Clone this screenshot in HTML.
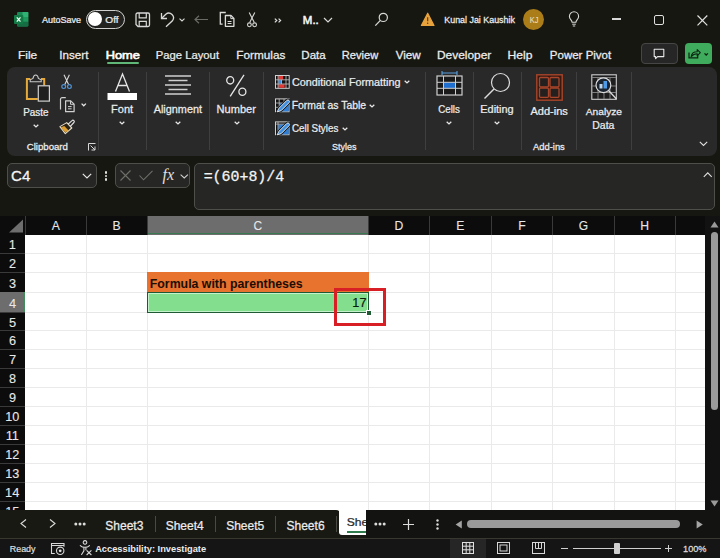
<!DOCTYPE html>
<html><head><meta charset="utf-8"><style>
html,body{margin:0;padding:0;}
body{width:720px;height:558px;overflow:hidden;position:relative;background:#171711;font-family:"Liberation Sans", sans-serif;}
.t{position:absolute;white-space:nowrap;}
.r{position:absolute;}
svg.r{overflow:visible;}
</style></head><body>
<svg class="r" style="left:14px;top:12px" width="15" height="15" viewBox="0 0 15 15"><rect x="3" y="0" width="11.3" height="14.5" rx="1.2" fill="#1b8a55"/>
<rect x="8.5" y="0" width="5.8" height="5" fill="#2fb274"/>
<rect x="3" y="5" width="11.3" height="4.8" fill="#1e9a5d"/>
<rect x="3" y="9.8" width="11.3" height="4.7" rx="1" fill="#176d43"/>
<rect x="0" y="3" width="9.3" height="9" rx="1" fill="#127a45"/>
<path d="M2.8 5.3 L6.5 9.7 M6.5 5.3 L2.8 9.7" stroke="#f0fff4" stroke-width="1.3"/></svg>
<svg class="r" style="left:0;top:0" width="1" height="1"><text transform="translate(42.08,23) scale(1.0149,1)" font-size="8.89" fill="#ececec" font-weight="400" font-family="'Liberation Sans', sans-serif"  stroke="#ececec" stroke-width="0.25">AutoSave</text></svg>
<div class="r" style="left:86px;top:10px;width:39px;height:18.5px;border:1.5px solid #d0d0d0;border-radius:10px;box-sizing:border-box;background:#222220"></div>
<div class="r" style="left:88.3px;top:12.3px;width:13.8px;height:13.8px;background:#fff;border-radius:50%"></div>
<svg class="r" style="left:0;top:0" width="1" height="1"><text transform="translate(105.32,23) scale(1.0953,1)" font-size="9.27" fill="#ececec" font-weight="400" font-family="'Liberation Sans', sans-serif"  stroke="#ececec" stroke-width="0.25">Off</text></svg>
<svg class="r" style="left:135px;top:12px" width="16" height="16" viewBox="0 0 16 16"><path d="M2.5 1 H13 A1.5 1.5 0 0 1 14.5 2.5 V13 A1.5 1.5 0 0 1 13 14.5 H3 L1 12.5 V2.5 A1.5 1.5 0 0 1 2.5 1 Z" fill="none" stroke="#d8d8d8" stroke-width="1.3"/>
<path d="M4.2 1 V5.8 H11.3 V1" fill="none" stroke="#d8d8d8" stroke-width="1.2"/>
<path d="M4.2 14.5 V9.3 H11.3 V14.5" fill="none" stroke="#d8d8d8" stroke-width="1.2"/></svg>
<svg class="r" style="left:159px;top:11px" width="17" height="17" viewBox="0 0 17 17"><path d="M2.5 2 V7.5 H8" fill="none" stroke="#d8d8d8" stroke-width="1.3"/>
<path d="M2.5 7.5 L6.8 3.2 A4.7 4.7 0 0 1 13.4 9.8 L7 15.8" fill="none" stroke="#d8d8d8" stroke-width="1.3"/></svg>
<svg class="r" style="left:179.3px;top:17.6px" width="6" height="3.5" viewBox="0 0 6 3.5"><path d="M0.5 0.6 L3 3 L5.5 0.6" fill="none" stroke="#d8d8d8" stroke-width="1.1"/></svg>
<svg class="r" style="left:194px;top:15px" width="15" height="9" viewBox="0 0 15 9"><path d="M14 4.5 H1 M5 0.7 L1 4.5 L5 8.3" fill="none" stroke="#6b6b66" stroke-width="1.2"/></svg>
<svg class="r" style="left:218px;top:11px" width="18" height="17" viewBox="0 0 18 17"><path d="M4.6 13.2 H2.3 V1.5 H7.8" fill="none" stroke="#dcdcdc" stroke-width="1.3"/>
<path d="M7.4 4.5 H13 L15.9 7.4 V15.3 H7.4 Z" fill="none" stroke="#dcdcdc" stroke-width="1.3" stroke-linejoin="round"/>
<path d="M12.8 4.5 V7.6 H15.9" fill="none" stroke="#dcdcdc" stroke-width="1"/>
<path d="M9.6 10.5 H13.5 M9.6 12.5 H13.5" stroke="#dcdcdc" stroke-width="1.1"/></svg>
<svg class="r" style="left:247px;top:12px" width="10" height="16" viewBox="0 0 10 16"><path d="M2.2 0.5 L7.3 10.5 M7.8 0.5 L2.7 10.5" stroke="#d8d8d8" stroke-width="1.1" fill="none"/>
<circle cx="2.4" cy="12.8" r="1.9" fill="none" stroke="#d8d8d8" stroke-width="1.1"/>
<circle cx="7.6" cy="12.8" r="1.9" fill="none" stroke="#d8d8d8" stroke-width="1.1"/></svg>
<svg class="r" style="left:274px;top:17.5px" width="8" height="5" viewBox="0 0 8 5"><path d="M0.8 0.6 L2.8 2.5 L0.8 4.4 M4.6 0.6 L6.6 2.5 L4.6 4.4" fill="none" stroke="#e0e0e0" stroke-width="1.2"/></svg>
<svg class="r" style="left:0;top:0" width="1" height="1"><text transform="translate(302.80,24) scale(1.0156,1)" font-size="11.35" fill="#f4f4f4" font-weight="400" font-family="'Liberation Sans', sans-serif"  stroke="#f4f4f4" stroke-width="0.55">M..</text></svg>
<svg class="r" style="left:322.5px;top:16.5px" width="10" height="6" viewBox="0 0 10 6"><path d="M1 1 L5 5 L9 1" fill="none" stroke="#d8d8d8" stroke-width="1.2"/></svg>
<svg class="r" style="left:374px;top:11px" width="15" height="16" viewBox="0 0 15 16"><circle cx="9.3" cy="6.4" r="4.1" fill="none" stroke="#d8d8d8" stroke-width="1.2"/><path d="M6.4 9.4 L1.3 14.6" stroke="#d8d8d8" stroke-width="1.3"/></svg>
<svg class="r" style="left:420px;top:11px" width="16" height="16" viewBox="0 0 16 16"><path d="M7.7 2.2 L14 14.5 H1.4 Z" fill="#e8a33d" stroke="#e8a33d" stroke-linejoin="round" stroke-width="1.2"/><path d="M7.7 6.3 V10.3" stroke="#4a3210" stroke-width="1.1"/><circle cx="7.7" cy="12.3" r="0.7" fill="#4a3210"/></svg>
<svg class="r" style="left:0;top:0" width="1" height="1"><text transform="translate(444.27,23) scale(0.9924,1)" font-size="8.97" fill="#ececec" font-weight="400" font-family="'Liberation Sans', sans-serif"  stroke="#ececec" stroke-width="0.25">Kunal Jai Kaushik</text></svg>
<div class="r" style="left:523.3px;top:8.9px;width:21.1px;height:21.1px;background:#ab7d18;border-radius:50%"></div>
<svg class="r" style="left:0;top:0" width="1" height="1"><text transform="translate(529.69,23) scale(0.7977,1)" font-size="9.31" fill="#f3e4c4" font-weight="400" font-family="'Liberation Sans', sans-serif" >KJ</text></svg>
<svg class="r" style="left:568px;top:11px" width="13" height="17" viewBox="0 0 13 17"><path d="M4.1 11.2 C4.1 9.3 1.4 8.2 1.4 5.4 A4.6 4.6 0 0 1 10.6 5.4 C10.6 8.2 7.9 9.3 7.9 11.2 Z" fill="none" stroke="#d8d8d8" stroke-width="1.1"/>
<path d="M4.2 13.2 H7.8 M4.8 15 H7.2" stroke="#d8d8d8" stroke-width="1"/></svg>
<div class="r" style="left:611.7px;top:18.4px;width:9.5px;height:1.2px;background:#d8d8d8"></div>
<div class="r" style="left:654px;top:14.8px;width:10px;height:9.8px;border:1.3px solid #e0e0e0;border-radius:2px;box-sizing:border-box"></div>
<svg class="r" style="left:696.5px;top:14.5px" width="11" height="11" viewBox="0 0 11 11"><path d="M0.5 0.5 L10.3 10.3 M10.3 0.5 L0.5 10.3" stroke="#e0e0e0" stroke-width="1.2"/></svg>
<svg class="r" style="left:0;top:0" width="1" height="1"><text transform="translate(18.02,59) scale(1.1079,1)" font-size="10.76" fill="#ececec" font-weight="400" font-family="'Liberation Sans', sans-serif"  stroke="#ececec" stroke-width="0.25">File</text></svg>
<svg class="r" style="left:0;top:0" width="1" height="1"><text transform="translate(59.22,59) scale(1.0283,1)" font-size="11.35" fill="#ececec" font-weight="400" font-family="'Liberation Sans', sans-serif"  stroke="#ececec" stroke-width="0.25">Insert</text></svg>
<svg class="r" style="left:0;top:0" width="1" height="1"><text transform="translate(105.64,59) scale(1.1301,1)" font-size="11.35" fill="#ffffff" font-weight="400" font-family="'Liberation Sans', sans-serif"  stroke="#ffffff" stroke-width="0.6">Home</text></svg>
<svg class="r" style="left:0;top:0" width="1" height="1"><text transform="translate(155.77,59) scale(0.9939,1)" font-size="11.35" fill="#ececec" font-weight="400" font-family="'Liberation Sans', sans-serif"  stroke="#ececec" stroke-width="0.25">Page Layout</text></svg>
<svg class="r" style="left:0;top:0" width="1" height="1"><text transform="translate(236.33,59) scale(1.0947,1)" font-size="10.76" fill="#ececec" font-weight="400" font-family="'Liberation Sans', sans-serif"  stroke="#ececec" stroke-width="0.25">Formulas</text></svg>
<svg class="r" style="left:0;top:0" width="1" height="1"><text transform="translate(301.35,59) scale(1.0160,1)" font-size="11.35" fill="#ececec" font-weight="400" font-family="'Liberation Sans', sans-serif"  stroke="#ececec" stroke-width="0.25">Data</text></svg>
<svg class="r" style="left:0;top:0" width="1" height="1"><text transform="translate(341.78,59) scale(1.0341,1)" font-size="10.76" fill="#ececec" font-weight="400" font-family="'Liberation Sans', sans-serif"  stroke="#ececec" stroke-width="0.25">Review</text></svg>
<svg class="r" style="left:0;top:0" width="1" height="1"><text transform="translate(395.64,59) scale(1.0821,1)" font-size="10.76" fill="#ececec" font-weight="400" font-family="'Liberation Sans', sans-serif"  stroke="#ececec" stroke-width="0.25">View</text></svg>
<svg class="r" style="left:0;top:0" width="1" height="1"><text transform="translate(437.02,59) scale(1.1087,1)" font-size="10.76" fill="#ececec" font-weight="400" font-family="'Liberation Sans', sans-serif"  stroke="#ececec" stroke-width="0.25">Developer</text></svg>
<svg class="r" style="left:0;top:0" width="1" height="1"><text transform="translate(507.50,59) scale(1.1255,1)" font-size="10.76" fill="#ececec" font-weight="400" font-family="'Liberation Sans', sans-serif"  stroke="#ececec" stroke-width="0.25">Help</text></svg>
<svg class="r" style="left:0;top:0" width="1" height="1"><text transform="translate(549.85,59) scale(1.0704,1)" font-size="10.76" fill="#ececec" font-weight="400" font-family="'Liberation Sans', sans-serif"  stroke="#ececec" stroke-width="0.25">Power Pivot</text></svg>
<div class="r" style="left:106.7px;top:62px;width:32.6px;height:2px;background:#5fb878;border-radius:1px"></div>
<div class="r" style="left:640.5px;top:43.2px;width:37.3px;height:21.3px;border:1px solid #464646;border-radius:4px;box-sizing:border-box;background:#262626"></div>
<svg class="r" style="left:653px;top:48px" width="13" height="12" viewBox="0 0 13 12"><path d="M1.2 1.2 H10.8 V8.6 H4.6 L2.6 10.6 V8.6 H1.2 Z" fill="none" stroke="#e8e8e8" stroke-width="1.1" stroke-linejoin="round"/></svg>
<div class="r" style="left:685px;top:43.2px;width:27.2px;height:21.1px;background:#3fab5c;border-radius:4px"></div>
<svg class="r" style="left:686px;top:46px" width="26" height="15" viewBox="0 0 26 15"><path d="M3 6.5 V11.9 H11.7 V9.3" fill="none" stroke="#0c2412" stroke-width="1.2"/><path d="M5.2 10.6 C5.6 7.4 7.8 5.8 11.2 5.8 V3.6 L14.3 6.7 L11.2 9.8 V7.7 C8.8 7.7 6.8 8.6 5.2 10.6 Z" fill="none" stroke="#0c2412" stroke-width="1.1" stroke-linejoin="round"/><path d="M18.5 7.4 L20.2 9 L21.9 7.4" fill="none" stroke="#0c2412" stroke-width="1.3"/></svg>
<div class="r" style="left:7px;top:67px;width:709.5px;height:88.5px;background:#292929;border-radius:8px"></div>
<div class="r" style="left:98px;top:71.5px;width:1px;height:78.5px;background:#3f3f3f"></div>
<div class="r" style="left:146px;top:71.5px;width:1px;height:78.5px;background:#3f3f3f"></div>
<div class="r" style="left:209px;top:71.5px;width:1px;height:78.5px;background:#3f3f3f"></div>
<div class="r" style="left:263px;top:71.5px;width:1px;height:78.5px;background:#3f3f3f"></div>
<div class="r" style="left:425px;top:71.5px;width:1px;height:78.5px;background:#3f3f3f"></div>
<div class="r" style="left:473px;top:71.5px;width:1px;height:78.5px;background:#3f3f3f"></div>
<div class="r" style="left:521px;top:71.5px;width:1px;height:78.5px;background:#3f3f3f"></div>
<div class="r" style="left:576px;top:71.5px;width:1px;height:78.5px;background:#3f3f3f"></div>
<div class="r" style="left:631px;top:71.5px;width:1px;height:78.5px;background:#3f3f3f"></div>
<svg class="r" style="left:20px;top:70px" width="36" height="36" viewBox="0 0 36 36"><path d="M10.3 9 H6.9 V29 H17.8" fill="none" stroke="#e6a93c" stroke-width="2"/>
<path d="M21 9 H24.2 V15.5" fill="none" stroke="#e6a93c" stroke-width="2"/>
<path d="M10.2 11.7 V9.8 L13 8.4 C13.4 6 14.4 5 15.7 5 C17 5 18 6 18.4 8.4 L21.2 9.8 V11.7 Z" fill="#292929" stroke="#c8c8c8" stroke-width="1.1"/>
<rect x="18.3" y="15.8" width="11.1" height="15.3" fill="#1f1f1f" stroke="#d0d0d0" stroke-width="1.2"/></svg>
<svg class="r" style="left:0;top:0" width="1" height="1"><text transform="translate(23.18,116) scale(0.9470,1)" font-size="10.47" fill="#ececec" font-weight="400" font-family="'Liberation Sans', sans-serif"  stroke="#ececec" stroke-width="0.25">Paste</text></svg>
<svg class="r" style="left:32.5px;top:123.5px" width="6" height="4" viewBox="0 0 6 4"><path d="M0.7 0.7 L3 2.9 L5.3 0.7" fill="none" stroke="#e8e8e8" stroke-width="1.3"/></svg>
<svg class="r" style="left:60px;top:73px" width="14" height="17" viewBox="0 0 14 17"><path d="M4 1.8 L8.6 11.6 M9.4 1.8 L4.8 11.6" stroke="#d8d8d8" stroke-width="1.1" fill="none"/>
<circle cx="3.7" cy="13.6" r="1.9" fill="none" stroke="#5294d6" stroke-width="1.2"/>
<circle cx="9.4" cy="13.6" r="1.9" fill="none" stroke="#5294d6" stroke-width="1.2"/></svg>
<svg class="r" style="left:58px;top:96px" width="18" height="17" viewBox="0 0 18 17"><path d="M2.5 13.4 V3.2 A1.6 1.6 0 0 1 4.1 1.6 H7.8" fill="none" stroke="#cfcfcf" stroke-width="1.2"/>
<path d="M7.6 4.8 H12.7 L16.1 8.2 V15.7 H7.6 Z" fill="none" stroke="#cfcfcf" stroke-width="1.2" stroke-linejoin="round"/>
<path d="M12.5 4.8 V8.3 H16" fill="none" stroke="#cfcfcf" stroke-width="1"/>
<path d="M10 10.6 H13.6 M10 12.8 H13.6" stroke="#cfcfcf" stroke-width="1"/></svg>
<svg class="r" style="left:80.8px;top:103px" width="5.5" height="3.5" viewBox="0 0 5.5 3.5"><path d="M0.6 0.6 L2.75 2.8 L4.9 0.6" fill="none" stroke="#e6e6e6" stroke-width="1.3"/></svg>
<svg class="r" style="left:58px;top:119px" width="18" height="16" viewBox="0 0 18 16"><path d="M1.9 7.6 L8.75 3.6 L13.8 9 L7.3 14.6 Z" fill="#2a2418" stroke="#e6dcc6" stroke-width="1.1" stroke-linejoin="round"/>
<path d="M2.9 8.3 L6.3 6.9 L10.6 11.6 L7.3 13.5 Z" fill="#e0a030"/>
<path d="M10.2 5.2 L14 1.6 A1.3 1.3 0 0 1 15.9 3.5 L12.3 7.3" stroke="#e6e6e6" stroke-width="1.1" fill="none"/></svg>
<svg class="r" style="left:0;top:0" width="1" height="1"><text transform="translate(26.72,150) scale(1.0596,1)" font-size="9.10" fill="#ececec" font-weight="400" font-family="'Liberation Sans', sans-serif"  stroke="#ececec" stroke-width="0.25">Clipboard</text></svg>
<svg class="r" style="left:87.5px;top:143px" width="8" height="8" viewBox="0 0 8 8"><path d="M0.5 7.5 V0.5 H7.5" fill="none" stroke="#d8d8d8" stroke-width="1"/><path d="M2.5 2.5 L7 7 M3.5 7 H7 V3.5" fill="none" stroke="#d8d8d8" stroke-width="1"/></svg>
<svg class="r" style="left:107px;top:73px" width="31" height="27" viewBox="0 0 31 27"><path d="M8.5 18.5 L15.5 1 L22.5 18.5 M11 12.5 H20" fill="none" stroke="#e6e6e6" stroke-width="1.3"/><rect x="0.5" y="20" width="29.5" height="7" fill="#ffffff"/></svg>
<svg class="r" style="left:0;top:0" width="1" height="1"><text transform="translate(111.09,113) scale(0.9449,1)" font-size="11.64" fill="#ececec" font-weight="400" font-family="'Liberation Sans', sans-serif"  stroke="#ececec" stroke-width="0.25">Font</text></svg>
<svg class="r" style="left:119.3px;top:120.5px" width="6" height="4" viewBox="0 0 6 4"><path d="M0.7 0.7 L3 2.9 L5.3 0.7" fill="none" stroke="#e8e8e8" stroke-width="1.3"/></svg>
<svg class="r" style="left:165px;top:75px" width="26" height="21" viewBox="0 0 26 21"><path d="M0 1 H26 M3.5 5.5 H22.5 M0 10 H26 M3.5 14.5 H22.5 M0 19 H26" stroke="#cfcfcf" stroke-width="1.3"/></svg>
<svg class="r" style="left:0;top:0" width="1" height="1"><text transform="translate(153.72,113) scale(0.9854,1)" font-size="11.03" fill="#ececec" font-weight="400" font-family="'Liberation Sans', sans-serif"  stroke="#ececec" stroke-width="0.25">Alignment</text></svg>
<svg class="r" style="left:174.5px;top:120.5px" width="6" height="4" viewBox="0 0 6 4"><path d="M0.7 0.7 L3 2.9 L5.3 0.7" fill="none" stroke="#e8e8e8" stroke-width="1.3"/></svg>
<svg class="r" style="left:225px;top:74px" width="24" height="23" viewBox="0 0 24 23"><ellipse cx="5.2" cy="6.3" rx="3.5" ry="3.7" fill="none" stroke="#e6e6e6" stroke-width="1.3"/><ellipse cx="17.4" cy="17.7" rx="3.5" ry="3.6" fill="none" stroke="#e6e6e6" stroke-width="1.3"/><path d="M19 0.9 L5.2 22.3" stroke="#e6e6e6" stroke-width="1.3"/></svg>
<svg class="r" style="left:0;top:0" width="1" height="1"><text transform="translate(216.59,113) scale(1.0026,1)" font-size="11.03" fill="#ececec" font-weight="400" font-family="'Liberation Sans', sans-serif"  stroke="#ececec" stroke-width="0.25">Number</text></svg>
<svg class="r" style="left:233.75px;top:120.5px" width="6" height="4" viewBox="0 0 6 4"><path d="M0.7 0.7 L3 2.9 L5.3 0.7" fill="none" stroke="#e8e8e8" stroke-width="1.3"/></svg>
<svg class="r" style="left:274.5px;top:74.5px" width="15" height="14" viewBox="0 0 15 14"><rect x="0.5" y="0.5" width="13.7" height="12.8" fill="#141414" stroke="#d0d0d0" stroke-width="1"/>
<rect x="3.4" y="1" width="4.6" height="3.6" fill="#e53935"/><rect x="3.4" y="9.3" width="6.2" height="3.5" fill="#e53935"/>
<rect x="3.4" y="5.1" width="2.8" height="3.6" fill="#3a8ee6"/>
<path d="M0.5 4.8 H14.2 M0.5 9 H14.2 M3.1 0.5 V13.3 M11 0.5 V13.3 M6.5 4.8 V9" stroke="#c8c8c8" stroke-width="0.8"/></svg>
<svg class="r" style="left:0;top:0" width="1" height="1"><text transform="translate(291.96,86) scale(0.9497,1)" font-size="11.38" fill="#ececec" font-weight="400" font-family="'Liberation Sans', sans-serif"  stroke="#ececec" stroke-width="0.25">Conditional Formatting</text></svg>
<svg class="r" style="left:404px;top:80px" width="6" height="4" viewBox="0 0 6 4"><path d="M0.7 0.7 L3 2.9 L5.3 0.7" fill="none" stroke="#e8e8e8" stroke-width="1.3"/></svg>
<svg class="r" style="left:274.5px;top:97.5px" width="15" height="15" viewBox="0 0 15 15"><rect x="0.5" y="0.9" width="13.5" height="12.8" fill="#141414" stroke="#d0d0d0" stroke-width="1"/>
<rect x="4.5" y="5.3" width="9.2" height="8.1" fill="#2f7fd6"/>
<path d="M0.5 5 H14 M0.5 9.3 H4.5 M4.2 0.9 V13.7 M9 0.9 V5" stroke="#c0c0c0" stroke-width="0.8"/><path d="M2.2 13.9 L3.87 10.37 L11.87 2.37 A1.6 1.6 0 0 1 14.13 4.63 L6.13 12.63 Z" fill="none" stroke="#161616" stroke-width="2.4" stroke-linejoin="round"/><path d="M2.2 13.9 L3.87 10.37 L11.87 2.37 A1.6 1.6 0 0 1 14.13 4.63 L6.13 12.63 Z" fill="#3f8fe0" stroke="#ececec" stroke-width="0.9" stroke-linejoin="round"/></svg>
<svg class="r" style="left:0;top:0" width="1" height="1"><text transform="translate(291.64,109) scale(0.9163,1)" font-size="11.38" fill="#ececec" font-weight="400" font-family="'Liberation Sans', sans-serif"  stroke="#ececec" stroke-width="0.25">Format as Table</text></svg>
<svg class="r" style="left:369px;top:103.5px" width="6" height="4" viewBox="0 0 6 4"><path d="M0.7 0.7 L3 2.9 L5.3 0.7" fill="none" stroke="#e8e8e8" stroke-width="1.3"/></svg>
<svg class="r" style="left:274.5px;top:120.5px" width="15" height="15" viewBox="0 0 15 15"><rect x="0.5" y="0.9" width="13.5" height="12.8" fill="#141414" stroke="#d0d0d0" stroke-width="1"/>
<rect x="3.3" y="3.4" width="10.4" height="10" fill="#2f7fd6"/>
<path d="M0.5 3.1 H14 M3 0.9 V13.7" stroke="#c0c0c0" stroke-width="0.8"/><path d="M2.2 13.9 L3.87 10.37 L11.87 2.37 A1.6 1.6 0 0 1 14.13 4.63 L6.13 12.63 Z" fill="none" stroke="#161616" stroke-width="2.4" stroke-linejoin="round"/><path d="M2.2 13.9 L3.87 10.37 L11.87 2.37 A1.6 1.6 0 0 1 14.13 4.63 L6.13 12.63 Z" fill="#3f8fe0" stroke="#ececec" stroke-width="0.9" stroke-linejoin="round"/></svg>
<svg class="r" style="left:0;top:0" width="1" height="1"><text transform="translate(292.01,132) scale(0.8617,1)" font-size="11.38" fill="#ececec" font-weight="400" font-family="'Liberation Sans', sans-serif"  stroke="#ececec" stroke-width="0.25">Cell Styles</text></svg>
<svg class="r" style="left:341.5px;top:127px" width="6" height="4" viewBox="0 0 6 4"><path d="M0.7 0.7 L3 2.9 L5.3 0.7" fill="none" stroke="#e8e8e8" stroke-width="1.3"/></svg>
<svg class="r" style="left:0;top:0" width="1" height="1"><text transform="translate(332.10,150) scale(0.9582,1)" font-size="9.38" fill="#ececec" font-weight="400" font-family="'Liberation Sans', sans-serif"  stroke="#ececec" stroke-width="0.25">Styles</text></svg>
<svg class="r" style="left:436px;top:71px" width="27" height="25" viewBox="0 0 27 25"><path d="M6 2 H21 M6 0 V4 M21 0 V4" stroke="#5aa0e0" stroke-width="1.1"/>
<rect x="1" y="5" width="25" height="19" fill="#1a1a1a" stroke="#cfcfcf" stroke-width="1.2"/>
<rect x="7.5" y="11.3" width="12" height="6" fill="#1f6fd0"/>
<path d="M1 11.3 H26 M1 17.3 H26 M7.5 5 V24 M19.5 5 V24" stroke="#cfcfcf" stroke-width="1"/></svg>
<svg class="r" style="left:0;top:0" width="1" height="1"><text transform="translate(438.26,113) scale(0.8798,1)" font-size="11.03" fill="#ececec" font-weight="400" font-family="'Liberation Sans', sans-serif"  stroke="#ececec" stroke-width="0.25">Cells</text></svg>
<svg class="r" style="left:446.25px;top:120.5px" width="6" height="4" viewBox="0 0 6 4"><path d="M0.7 0.7 L3 2.9 L5.3 0.7" fill="none" stroke="#e8e8e8" stroke-width="1.3"/></svg>
<svg class="r" style="left:483px;top:72px" width="29" height="28" viewBox="0 0 29 28"><circle cx="17.5" cy="10.5" r="9" fill="none" stroke="#dcdcdc" stroke-width="1.2"/><path d="M11 17 L1.5 26.5" stroke="#dcdcdc" stroke-width="1.4"/></svg>
<svg class="r" style="left:0;top:0" width="1" height="1"><text transform="translate(480.35,113) scale(0.9879,1)" font-size="11.03" fill="#ececec" font-weight="400" font-family="'Liberation Sans', sans-serif"  stroke="#ececec" stroke-width="0.25">Editing</text></svg>
<svg class="r" style="left:494.25px;top:120.5px" width="6" height="4" viewBox="0 0 6 4"><path d="M0.7 0.7 L3 2.9 L5.3 0.7" fill="none" stroke="#e8e8e8" stroke-width="1.3"/></svg>
<svg class="r" style="left:536px;top:74px" width="27" height="27" viewBox="0 0 27 27"><rect x="0.8" y="0.8" width="25.4" height="25.4" fill="#361a12" stroke="#a8452a" stroke-width="1.4"/>
<rect x="3.5" y="3.5" width="9" height="9.3" rx="1" fill="#242020" stroke="#a8452a" stroke-width="1.3"/>
<rect x="14" y="3.5" width="9" height="9.3" rx="1" fill="#242020" stroke="#a8452a" stroke-width="1.3"/>
<rect x="3.5" y="14" width="9" height="9.3" rx="1" fill="#242020" stroke="#a8452a" stroke-width="1.3"/>
<rect x="14" y="14" width="9" height="9.3" rx="1" fill="#242020" stroke="#a8452a" stroke-width="1.3"/></svg>
<svg class="r" style="left:0;top:0" width="1" height="1"><text transform="translate(530.47,115) scale(1.0325,1)" font-size="10.69" fill="#ececec" font-weight="400" font-family="'Liberation Sans', sans-serif"  stroke="#ececec" stroke-width="0.25">Add-ins</text></svg>
<svg class="r" style="left:0;top:0" width="1" height="1"><text transform="translate(532.98,150) scale(0.9461,1)" font-size="9.93" fill="#ececec" font-weight="400" font-family="'Liberation Sans', sans-serif"  stroke="#ececec" stroke-width="0.25">Add-ins</text></svg>
<svg class="r" style="left:591px;top:74px" width="27" height="27" viewBox="0 0 27 27"><rect x="0.8" y="0.8" width="24.5" height="24.5" fill="#1e1e1e" stroke="#cfcfcf" stroke-width="1.1"/>
<path d="M0.8 3.5 H25 M0.8 12 H25 M0.8 18.5 H25 M7 3.5 V25 M13 3.5 V25 M19 3.5 V25" stroke="#8a8a8a" stroke-width="0.9"/>
<circle cx="12.4" cy="11.2" r="7.4" fill="#1a2430" stroke="#dcdcdc" stroke-width="1.2"/>
<path d="M17.5 16.5 L25.5 25" stroke="#dcdcdc" stroke-width="1.3"/>
<rect x="8.5" y="10" width="3" height="4.5" fill="#bcd6ee"/><rect x="12.5" y="7" width="3.5" height="7.5" fill="#4c9be8"/></svg>
<svg class="r" style="left:0;top:0" width="1" height="1"><text transform="translate(585.77,115) scale(1.0263,1)" font-size="9.93" fill="#ececec" font-weight="400" font-family="'Liberation Sans', sans-serif"  stroke="#ececec" stroke-width="0.25">Analyze</text></svg>
<svg class="r" style="left:0;top:0" width="1" height="1"><text transform="translate(592.34,129) scale(0.9205,1)" font-size="11.35" fill="#ececec" font-weight="400" font-family="'Liberation Sans', sans-serif"  stroke="#ececec" stroke-width="0.25">Data</text></svg>
<svg class="r" style="left:698.5px;top:140.5px" width="9" height="6" viewBox="0 0 9 6"><path d="M0.8 0.8 L4.5 4.5 L8.2 0.8" fill="none" stroke="#e0e0e0" stroke-width="1.1"/></svg>
<div class="r" style="left:7.2px;top:163.2px;width:89.6px;height:25px;background:#262624;border:1px solid #4e4e4b;border-radius:5px;box-sizing:border-box"></div>
<svg class="r" style="left:0;top:0" width="1" height="1"><text transform="translate(11.05,181) scale(1.0068,1)" font-size="14.98" fill="#f4f4f4" font-weight="400" font-family="'Liberation Sans', sans-serif"  stroke="#f4f4f4" stroke-width="0.25">C4</text></svg>
<svg class="r" style="left:82.2px;top:173.3px" width="10" height="6" viewBox="0 0 10 6"><path d="M0.8 0.8 L5 5 L9.2 0.8" fill="none" stroke="#e6e6e6" stroke-width="1.2"/></svg>
<div class="r" style="left:104.5px;top:171.2px;width:2.6px;height:2.6px;background:#e0e0e0;border-radius:50%"></div>
<div class="r" style="left:104.5px;top:174.6px;width:2.6px;height:2.6px;background:#e0e0e0;border-radius:50%"></div>
<div class="r" style="left:104.5px;top:178.0px;width:2.6px;height:2.6px;background:#e0e0e0;border-radius:50%"></div>
<div class="r" style="left:114.5px;top:163.2px;width:75.5px;height:25px;background:#262624;border:1px solid #4e4e4b;border-radius:5px;box-sizing:border-box"></div>
<svg class="r" style="left:120px;top:170px" width="11" height="11" viewBox="0 0 11 11"><path d="M0.5 0.5 L10.5 10.5 M10.5 0.5 L0.5 10.5" stroke="#6e6e6a" stroke-width="1.1"/></svg>
<svg class="r" style="left:139px;top:170px" width="14" height="11" viewBox="0 0 14 11"><path d="M0.5 5.5 L4.5 9.8 L13.5 0.8" fill="none" stroke="#6e6e6a" stroke-width="1.1"/></svg>
<div class="t" style="left:162.5px;top:166px;font-size:16px;line-height:18px;color:#e0e0e0;font-family:'Liberation Serif', serif;font-style:italic">fx</div>
<svg class="r" style="left:180px;top:173.8px" width="8.5" height="4.5" viewBox="0 0 8.5 4.5"><path d="M0.6 0.6 L4.25 3.9 L7.9 0.6" fill="none" stroke="#d0d0d0" stroke-width="1.1"/></svg>
<div class="r" style="left:194.3px;top:163.3px;width:521px;height:46.3px;background:#262624;border:1px solid #4e4e4b;border-radius:5px;box-sizing:border-box"></div>
<svg class="r" style="left:0;top:0" width="1" height="1"><text transform="translate(203.64,181) scale(1.0224,1)" font-size="14.60" fill="#f4f4f4" font-weight="400" font-family="'Liberation Mono', monospace"  stroke="#f4f4f4" stroke-width="0.25">=(60+8)/4</text></svg>
<svg class="r" style="left:702.5px;top:172px" width="9.5" height="5.5" viewBox="0 0 9.5 5.5"><path d="M0.8 4.8 L4.75 0.8 L8.7 4.8" fill="none" stroke="#e0e0e0" stroke-width="1.1"/></svg>
<div class="r" style="left:0px;top:216px;width:705px;height:18.5px;background:#0c0c0c"></div>
<div class="r" style="left:0px;top:234.5px;width:25px;height:276px;background:#0c0c0c"></div>
<div class="r" style="left:25px;top:234.5px;width:680px;height:276px;background:#ffffff"></div>
<svg class="r" style="left:8px;top:219px" width="16" height="14" viewBox="0 0 16 14"><path d="M15 0.5 V13.5 H1 Z" fill="#6e6e6e"/></svg>
<div class="r" style="left:147.2px;top:216px;width:221.6px;height:18.5px;background:#6d6d6d"></div>
<div class="r" style="left:147.2px;top:233.3px;width:221.6px;height:1.2px;background:#3a7a52"></div>
<div class="r" style="left:24.5px;top:216px;width:1px;height:18.5px;background:#3a3a3a"></div>
<div class="r" style="left:86.0px;top:216px;width:1px;height:18.5px;background:#3a3a3a"></div>
<div class="r" style="left:146.7px;top:216px;width:1px;height:18.5px;background:#3a3a3a"></div>
<div class="r" style="left:368.3px;top:216px;width:1px;height:18.5px;background:#3a3a3a"></div>
<div class="r" style="left:429.0px;top:216px;width:1px;height:18.5px;background:#3a3a3a"></div>
<div class="r" style="left:491.2px;top:216px;width:1px;height:18.5px;background:#3a3a3a"></div>
<div class="r" style="left:552.2px;top:216px;width:1px;height:18.5px;background:#3a3a3a"></div>
<div class="r" style="left:613.5px;top:216px;width:1px;height:18.5px;background:#3a3a3a"></div>
<div class="r" style="left:674.8px;top:216px;width:1px;height:18.5px;background:#3a3a3a"></div>
<svg class="r" style="left:0;top:0" width="1" height="1"><text transform="translate(51.69,230) scale(0.9000,1)" font-size="13.53" fill="#e8e8e8" font-weight="400" font-family="'Liberation Sans', sans-serif"  stroke="#e8e8e8" stroke-width="0.1">A</text></svg>
<svg class="r" style="left:0;top:0" width="1" height="1"><text transform="translate(112.60,230) scale(0.9000,1)" font-size="13.53" fill="#e8e8e8" font-weight="400" font-family="'Liberation Sans', sans-serif"  stroke="#e8e8e8" stroke-width="0.1">B</text></svg>
<svg class="r" style="left:0;top:0" width="1" height="1"><text transform="translate(253.59,230) scale(0.9000,1)" font-size="13.33" fill="#e8e8e8" font-weight="400" font-family="'Liberation Sans', sans-serif"  stroke="#e8e8e8" stroke-width="0.1">C</text></svg>
<svg class="r" style="left:0;top:0" width="1" height="1"><text transform="translate(394.54,230) scale(0.9000,1)" font-size="13.53" fill="#e8e8e8" font-weight="400" font-family="'Liberation Sans', sans-serif"  stroke="#e8e8e8" stroke-width="0.1">D</text></svg>
<svg class="r" style="left:0;top:0" width="1" height="1"><text transform="translate(456.29,230) scale(0.9000,1)" font-size="13.53" fill="#e8e8e8" font-weight="400" font-family="'Liberation Sans', sans-serif"  stroke="#e8e8e8" stroke-width="0.1">E</text></svg>
<svg class="r" style="left:0;top:0" width="1" height="1"><text transform="translate(518.23,230) scale(0.9000,1)" font-size="13.53" fill="#e8e8e8" font-weight="400" font-family="'Liberation Sans', sans-serif"  stroke="#e8e8e8" stroke-width="0.1">F</text></svg>
<svg class="r" style="left:0;top:0" width="1" height="1"><text transform="translate(578.84,230) scale(0.9000,1)" font-size="13.33" fill="#e8e8e8" font-weight="400" font-family="'Liberation Sans', sans-serif"  stroke="#e8e8e8" stroke-width="0.1">G</text></svg>
<svg class="r" style="left:0;top:0" width="1" height="1"><text transform="translate(640.25,230) scale(0.9000,1)" font-size="13.53" fill="#e8e8e8" font-weight="400" font-family="'Liberation Sans', sans-serif"  stroke="#e8e8e8" stroke-width="0.1">H</text></svg>
<div class="r" style="left:86.0px;top:234.5px;width:1px;height:276px;background:#eaeaea"></div>
<div class="r" style="left:146.7px;top:234.5px;width:1px;height:276px;background:#eaeaea"></div>
<div class="r" style="left:368.3px;top:234.5px;width:1px;height:276px;background:#eaeaea"></div>
<div class="r" style="left:429.0px;top:234.5px;width:1px;height:276px;background:#eaeaea"></div>
<div class="r" style="left:491.2px;top:234.5px;width:1px;height:276px;background:#eaeaea"></div>
<div class="r" style="left:552.2px;top:234.5px;width:1px;height:276px;background:#eaeaea"></div>
<div class="r" style="left:613.5px;top:234.5px;width:1px;height:276px;background:#eaeaea"></div>
<div class="r" style="left:674.8px;top:234.5px;width:1px;height:276px;background:#eaeaea"></div>
<div class="r" style="left:25px;top:252.9px;width:680px;height:1px;background:#eaeaea"></div>
<div class="r" style="left:0px;top:252.9px;width:25px;height:1px;background:#3a3a3a"></div>
<svg class="r" style="left:0;top:0" width="1" height="1"><text transform="translate(8.76,249) scale(0.9500,1)" font-size="13.53" fill="#e8e8e8" font-weight="400" font-family="'Liberation Sans', sans-serif"  stroke="#e8e8e8" stroke-width="0.1">1</text></svg>
<div class="r" style="left:25px;top:272.4px;width:680px;height:1px;background:#eaeaea"></div>
<div class="r" style="left:0px;top:272.4px;width:25px;height:1px;background:#3a3a3a"></div>
<svg class="r" style="left:0;top:0" width="1" height="1"><text transform="translate(8.98,268) scale(0.9500,1)" font-size="13.33" fill="#e8e8e8" font-weight="400" font-family="'Liberation Sans', sans-serif"  stroke="#e8e8e8" stroke-width="0.1">2</text></svg>
<div class="r" style="left:25px;top:291.9px;width:680px;height:1px;background:#eaeaea"></div>
<div class="r" style="left:0px;top:291.9px;width:25px;height:1px;background:#3a3a3a"></div>
<svg class="r" style="left:0;top:0" width="1" height="1"><text transform="translate(9.02,288) scale(0.9500,1)" font-size="13.33" fill="#e8e8e8" font-weight="400" font-family="'Liberation Sans', sans-serif"  stroke="#e8e8e8" stroke-width="0.1">3</text></svg>
<div class="r" style="left:25px;top:311.7px;width:680px;height:1px;background:#eaeaea"></div>
<div class="r" style="left:0px;top:311.7px;width:25px;height:1px;background:#3a3a3a"></div>
<div class="r" style="left:0px;top:292.4px;width:25px;height:19.80000000000001px;background:#6d6d6d"></div>
<div class="r" style="left:23.5px;top:292.4px;width:1.5px;height:19.80000000000001px;background:#3e8d5a"></div>
<svg class="r" style="left:0;top:0" width="1" height="1"><text transform="translate(8.97,308) scale(0.9500,1)" font-size="13.53" fill="#e8e8e8" font-weight="400" font-family="'Liberation Sans', sans-serif"  stroke="#e8e8e8" stroke-width="0.1">4</text></svg>
<div class="r" style="left:25px;top:330.3px;width:680px;height:1px;background:#eaeaea"></div>
<div class="r" style="left:0px;top:330.3px;width:25px;height:1px;background:#3a3a3a"></div>
<svg class="r" style="left:0;top:0" width="1" height="1"><text transform="translate(8.93,327) scale(0.9500,1)" font-size="13.53" fill="#e8e8e8" font-weight="400" font-family="'Liberation Sans', sans-serif"  stroke="#e8e8e8" stroke-width="0.1">5</text></svg>
<div class="r" style="left:25px;top:348.9px;width:680px;height:1px;background:#eaeaea"></div>
<div class="r" style="left:0px;top:348.9px;width:25px;height:1px;background:#3a3a3a"></div>
<svg class="r" style="left:0;top:0" width="1" height="1"><text transform="translate(8.94,345) scale(0.9500,1)" font-size="13.33" fill="#e8e8e8" font-weight="400" font-family="'Liberation Sans', sans-serif"  stroke="#e8e8e8" stroke-width="0.1">6</text></svg>
<div class="r" style="left:25px;top:367.7px;width:680px;height:1px;background:#eaeaea"></div>
<div class="r" style="left:0px;top:367.7px;width:25px;height:1px;background:#3a3a3a"></div>
<svg class="r" style="left:0;top:0" width="1" height="1"><text transform="translate(8.93,364) scale(0.9500,1)" font-size="13.53" fill="#e8e8e8" font-weight="400" font-family="'Liberation Sans', sans-serif"  stroke="#e8e8e8" stroke-width="0.1">7</text></svg>
<div class="r" style="left:25px;top:386.8px;width:680px;height:1px;background:#eaeaea"></div>
<div class="r" style="left:0px;top:386.8px;width:25px;height:1px;background:#3a3a3a"></div>
<svg class="r" style="left:0;top:0" width="1" height="1"><text transform="translate(8.98,383) scale(0.9500,1)" font-size="13.33" fill="#e8e8e8" font-weight="400" font-family="'Liberation Sans', sans-serif"  stroke="#e8e8e8" stroke-width="0.1">8</text></svg>
<div class="r" style="left:25px;top:405.9px;width:680px;height:1px;background:#eaeaea"></div>
<div class="r" style="left:0px;top:405.9px;width:25px;height:1px;background:#3a3a3a"></div>
<svg class="r" style="left:0;top:0" width="1" height="1"><text transform="translate(8.97,402) scale(0.9500,1)" font-size="13.33" fill="#e8e8e8" font-weight="400" font-family="'Liberation Sans', sans-serif"  stroke="#e8e8e8" stroke-width="0.1">9</text></svg>
<div class="r" style="left:25px;top:424.9px;width:680px;height:1px;background:#eaeaea"></div>
<div class="r" style="left:0px;top:424.9px;width:25px;height:1px;background:#3a3a3a"></div>
<svg class="r" style="left:0;top:0" width="1" height="1"><text transform="translate(5.23,421) scale(0.9500,1)" font-size="13.33" fill="#e8e8e8" font-weight="400" font-family="'Liberation Sans', sans-serif"  stroke="#e8e8e8" stroke-width="0.1">10</text></svg>
<div class="r" style="left:25px;top:443.8px;width:680px;height:1px;background:#eaeaea"></div>
<div class="r" style="left:0px;top:443.8px;width:25px;height:1px;background:#3a3a3a"></div>
<svg class="r" style="left:0;top:0" width="1" height="1"><text transform="translate(5.66,440) scale(0.9500,1)" font-size="13.53" fill="#e8e8e8" font-weight="400" font-family="'Liberation Sans', sans-serif"  stroke="#e8e8e8" stroke-width="0.1">11</text></svg>
<div class="r" style="left:25px;top:462.7px;width:680px;height:1px;background:#eaeaea"></div>
<div class="r" style="left:0px;top:462.7px;width:25px;height:1px;background:#3a3a3a"></div>
<svg class="r" style="left:0;top:0" width="1" height="1"><text transform="translate(5.31,459) scale(0.9500,1)" font-size="13.33" fill="#e8e8e8" font-weight="400" font-family="'Liberation Sans', sans-serif"  stroke="#e8e8e8" stroke-width="0.1">12</text></svg>
<div class="r" style="left:25px;top:481.8px;width:680px;height:1px;background:#eaeaea"></div>
<div class="r" style="left:0px;top:481.8px;width:25px;height:1px;background:#3a3a3a"></div>
<svg class="r" style="left:0;top:0" width="1" height="1"><text transform="translate(5.26,478) scale(0.9500,1)" font-size="13.33" fill="#e8e8e8" font-weight="400" font-family="'Liberation Sans', sans-serif"  stroke="#e8e8e8" stroke-width="0.1">13</text></svg>
<div class="r" style="left:25px;top:500.9px;width:680px;height:1px;background:#eaeaea"></div>
<div class="r" style="left:0px;top:500.9px;width:25px;height:1px;background:#3a3a3a"></div>
<svg class="r" style="left:0;top:0" width="1" height="1"><text transform="translate(5.06,497) scale(0.9500,1)" font-size="13.53" fill="#e8e8e8" font-weight="400" font-family="'Liberation Sans', sans-serif"  stroke="#e8e8e8" stroke-width="0.1">14</text></svg>
<svg class="r" style="left:0;top:0" width="1" height="1"><text transform="translate(5.14,516) scale(0.9500,1)" font-size="13.53" fill="#e8e8e8" font-weight="400" font-family="'Liberation Sans', sans-serif"  stroke="#e8e8e8" stroke-width="0.1">15</text></svg>
<div class="r" style="left:147.2px;top:272.4px;width:221.6px;height:20px;background:#e8732f"></div>
<svg class="r" style="left:0;top:0" width="1" height="1"><text transform="translate(149.77,288) scale(0.9622,1)" font-size="12.83" fill="#1e0d03" font-weight="700" font-family="'Liberation Sans', sans-serif" >Formula with parentheses</text></svg>
<div class="r" style="left:147.2px;top:291.6px;width:221.6px;height:21.1px;background:#83df8e;border:1.6px solid #1f5a35;box-sizing:border-box;box-shadow:inset 0 0 0 1px #c4f2ca"></div>
<svg class="r" style="left:0;top:0" width="1" height="1"><text transform="translate(352.35,307) scale(0.9803,1)" font-size="12.95" fill="#0c1a0e" font-weight="400" font-family="'Liberation Sans', sans-serif"  stroke="#0c1a0e" stroke-width="0.2">17</text></svg>
<div class="r" style="left:366.3px;top:310.2px;width:4px;height:4px;background:#1f5a35;border:0.5px solid #fff"></div>
<div class="r" style="left:334.2px;top:287.6px;width:52px;height:38.2px;border:3px solid #d81f26;box-sizing:border-box"></div>
<div class="r" style="left:705px;top:216px;width:15px;height:294.2px;background:#121212"></div>
<svg class="r" style="left:709.5px;top:220.5px" width="9" height="7" viewBox="0 0 9 7"><path d="M4.5 0.5 L8.5 6.5 H0.5 Z" fill="#9a9a9a"/></svg>
<div class="r" style="left:711px;top:232px;width:7px;height:178px;background:#9a9a9a;border-radius:3.5px"></div>
<svg class="r" style="left:709.5px;top:500px" width="9" height="7" viewBox="0 0 9 7"><path d="M0.5 0.5 H8.5 L4.5 6.5 Z" fill="#9a9a9a"/></svg>
<div class="r" style="left:339px;top:510px;width:28px;height:24.6px;background:#ffffff;border-radius:0 0 0 3px"></div>
<div class="r" style="left:0px;top:510.2px;width:339.8px;height:28px;background:#191913;border-radius:0 4px 0 0"></div>
<div class="r" style="left:366.1px;top:510.2px;width:354px;height:28px;background:#131311"></div>
<div class="r" style="left:339px;top:534.6px;width:28px;height:4px;background:#191913"></div>
<div class="r" style="left:339px;top:530px;width:5px;height:5px;background:#191913"></div>
<div class="r" style="left:339px;top:510px;width:28px;height:24.6px;background:#ffffff;border-radius:0 0 0 3px"></div>
<svg class="r" style="left:20px;top:519px" width="7" height="9" viewBox="0 0 7 9"><path d="M6 0.5 L1 4.5 L6 8.5" fill="none" stroke="#dcdcdc" stroke-width="1.1"/></svg>
<svg class="r" style="left:49px;top:519px" width="7" height="9" viewBox="0 0 7 9"><path d="M1 0.5 L6 4.5 L1 8.5" fill="none" stroke="#dcdcdc" stroke-width="1.1"/></svg>
<svg class="r" style="left:74px;top:522px" width="12" height="4" viewBox="0 0 12 4"><circle cx="1.8" cy="2" r="1.5" fill="#dcdcdc"/><circle cx="6" cy="2" r="1.5" fill="#dcdcdc"/><circle cx="10.2" cy="2" r="1.5" fill="#dcdcdc"/></svg>
<svg class="r" style="left:0;top:0" width="1" height="1"><text transform="translate(105.26,530) scale(0.9290,1)" font-size="12.97" fill="#ececec" font-weight="400" font-family="'Liberation Sans', sans-serif"  stroke="#ececec" stroke-width="0.25">Sheet3</text></svg>
<svg class="r" style="left:0;top:0" width="1" height="1"><text transform="translate(165.71,530) scale(0.9245,1)" font-size="12.97" fill="#ececec" font-weight="400" font-family="'Liberation Sans', sans-serif"  stroke="#ececec" stroke-width="0.25">Sheet4</text></svg>
<svg class="r" style="left:0;top:0" width="1" height="1"><text transform="translate(226.16,530) scale(0.9283,1)" font-size="12.97" fill="#ececec" font-weight="400" font-family="'Liberation Sans', sans-serif"  stroke="#ececec" stroke-width="0.25">Sheet5</text></svg>
<svg class="r" style="left:0;top:0" width="1" height="1"><text transform="translate(286.46,530) scale(0.9290,1)" font-size="12.97" fill="#ececec" font-weight="400" font-family="'Liberation Sans', sans-serif"  stroke="#ececec" stroke-width="0.25">Sheet6</text></svg>
<div class="r" style="left:154.6px;top:516.2px;width:1px;height:16.3px;background:#4a4a44"></div>
<div class="r" style="left:215px;top:516.2px;width:1px;height:16.3px;background:#4a4a44"></div>
<div class="r" style="left:275.4px;top:516.2px;width:1px;height:16.3px;background:#4a4a44"></div>
<div class="r" style="left:335.8px;top:516.2px;width:1px;height:16.3px;background:#4a4a44"></div>
<svg class="r" style="left:0;top:0" width="1" height="1"><text transform="translate(346.76,526) scale(1.0547,1)" font-size="11.45" fill="#2a2a2a" font-weight="400" font-family="'Liberation Sans', sans-serif"  stroke="#2a2a2a" stroke-width="0.25">Sheet7</text></svg>
<div class="r" style="left:347px;top:530.8px;width:19.1px;height:1.8px;background:#2f7d4c"></div>
<div class="r" style="left:366.1px;top:510.2px;width:354px;height:28px;background:#131311"></div>
<svg class="r" style="left:374px;top:522px" width="12" height="4" viewBox="0 0 12 4"><circle cx="1.8" cy="2" r="1.5" fill="#dcdcdc"/><circle cx="6" cy="2" r="1.5" fill="#dcdcdc"/><circle cx="10.2" cy="2" r="1.5" fill="#dcdcdc"/></svg>
<svg class="r" style="left:403px;top:518.5px" width="11" height="11" viewBox="0 0 11 11"><path d="M5.5 0 V11 M0 5.5 H11" stroke="#dcdcdc" stroke-width="1.2"/></svg>
<svg class="r" style="left:435.5px;top:518.5px" width="3" height="11" viewBox="0 0 3 11"><circle cx="1.5" cy="1.5" r="1.2" fill="#dcdcdc"/><circle cx="1.5" cy="5.5" r="1.2" fill="#dcdcdc"/><circle cx="1.5" cy="9.5" r="1.2" fill="#dcdcdc"/></svg>
<svg class="r" style="left:455.3px;top:520px" width="8" height="9" viewBox="0 0 8 9"><path d="M6.8 0.4 V8.4 L0.6 4.4 Z" fill="#a4a4a4"/></svg>
<div class="r" style="left:466.5px;top:520px;width:213px;height:8px;background:#9a9a9a;border-radius:4px"></div>
<svg class="r" style="left:695.5px;top:520px" width="8" height="9" viewBox="0 0 8 9"><path d="M0.6 0.4 V8.4 L6.8 4.4 Z" fill="#a4a4a4"/></svg>
<div class="r" style="left:0px;top:537.8px;width:720px;height:20.2px;background:#151515;border-top:1px solid #38382f;box-sizing:border-box"></div>
<svg class="r" style="left:0;top:0" width="1" height="1"><text transform="translate(9.76,552) scale(0.9644,1)" font-size="9.24" fill="#dcdcdc" font-weight="400" font-family="'Liberation Sans', sans-serif"  stroke="#dcdcdc" stroke-width="0.25">Ready</text></svg>
<svg class="r" style="left:50px;top:542px" width="16" height="14" viewBox="0 0 16 14"><path d="M4.8 11.5 H1.5 V1.5 H14 V4.8" fill="none" stroke="#d8d8d8" stroke-width="1.1"/>
<path d="M1.5 3.5 H14" stroke="#d8d8d8" stroke-width="1"/>
<circle cx="10.2" cy="8.8" r="3.7" fill="#151515" stroke="#d8d8d8" stroke-width="1.1"/><circle cx="10.2" cy="8.8" r="1.4" fill="#e0e0e0"/></svg>
<svg class="r" style="left:78px;top:541px" width="16" height="16" viewBox="0 0 16 16"><path d="M7 3.2 A1.8 1.8 0 1 1 7.01 3.2 Z" fill="none" stroke="#d8d8d8" stroke-width="1.1"/>
<path d="M2.3 4.6 C3.5 5.8 5 6.3 6.9 6.3 C8.8 6.3 10.3 5.8 11.5 4.6" fill="none" stroke="#d8d8d8" stroke-width="1.1" stroke-linecap="round"/>
<path d="M5.9 6.6 V9.8 L3.6 13.5 M7.9 6.6 V8.8" fill="none" stroke="#d8d8d8" stroke-width="1.1" stroke-linecap="round"/>
<path d="M8.6 9.3 L13.4 14 M13.4 9.3 L8.6 14" stroke="#d8d8d8" stroke-width="1.1"/></svg>
<svg class="r" style="left:0;top:0" width="1" height="1"><text transform="translate(95.17,552) scale(0.9617,1)" font-size="9.66" fill="#ececec" font-weight="700" font-family="'Liberation Sans', sans-serif" >Accessibility: Investigate</text></svg>
<div class="r" style="left:450.3px;top:539px;width:35.5px;height:19px;background:#262626"></div>
<svg class="r" style="left:461.5px;top:541.5px" width="12" height="12" viewBox="0 0 12 12"><rect x="0.5" y="0.5" width="11" height="11" fill="none" stroke="#e0e0e0" stroke-width="1"/><path d="M4.2 0.5 V11.5 M7.8 0.5 V11.5 M0.5 4.2 H11.5 M0.5 7.8 H11.5" stroke="#e0e0e0" stroke-width="1"/></svg>
<svg class="r" style="left:497px;top:541.5px" width="13" height="12" viewBox="0 0 13 12"><rect x="0.5" y="0.5" width="12" height="11" fill="none" stroke="#d8d8d8" stroke-width="1"/><rect x="3" y="3" width="7" height="6" fill="none" stroke="#d8d8d8" stroke-width="1"/></svg>
<svg class="r" style="left:531.5px;top:541.5px" width="13" height="12" viewBox="0 0 13 12"><rect x="0.5" y="0.5" width="12" height="11" fill="none" stroke="#d8d8d8" stroke-width="1"/><path d="M3.5 0.5 V6.5 H9.5 V0.5 M6.5 0.5 V6.5" fill="none" stroke="#d8d8d8" stroke-width="1"/></svg>
<div class="r" style="left:561.25px;top:547.5px;width:6.25px;height:1px;background:#cfcfcf"></div>
<div class="r" style="left:573px;top:547.5px;width:87.5px;height:1px;background:#cfcfcf"></div>
<div class="r" style="left:614.25px;top:543px;width:5.25px;height:10.5px;background:#cfcfcf;border-radius:1px"></div>
<svg class="r" style="left:665px;top:544.5px" width="7" height="7" viewBox="0 0 7 7"><path d="M3.5 0 V7 M0 3.5 H7" stroke="#cfcfcf" stroke-width="1"/></svg>
<svg class="r" style="left:0;top:0" width="1" height="1"><text transform="translate(683.06,552) scale(1.0259,1)" font-size="8.96" fill="#dcdcdc" font-weight="400" font-family="'Liberation Sans', sans-serif"  stroke="#dcdcdc" stroke-width="0.25">100%</text></svg>
</body></html>
